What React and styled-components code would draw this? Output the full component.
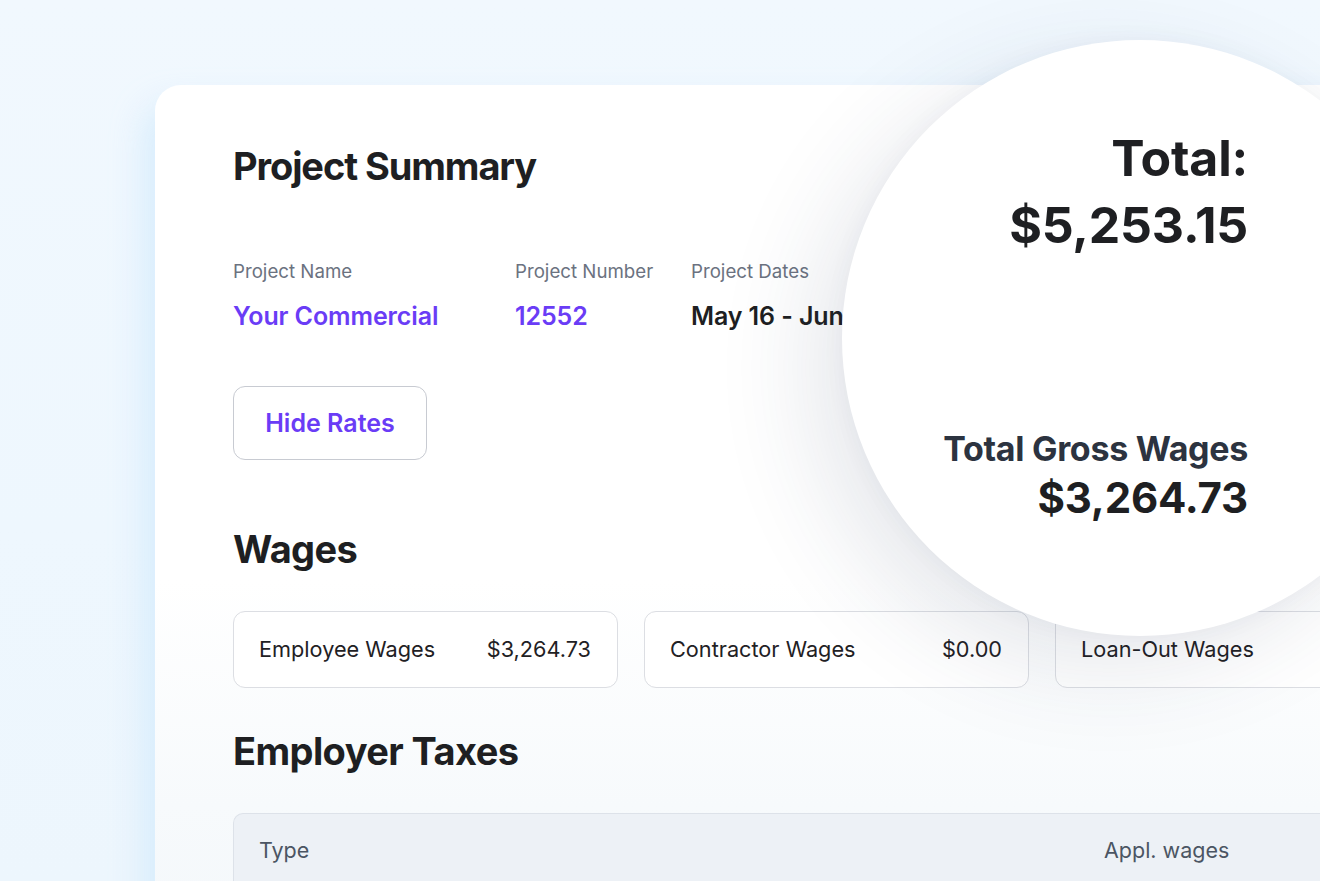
import React from "react";
import styled, { createGlobalStyle } from "styled-components";

const Global = createGlobalStyle`
  html, body { margin: 0; padding: 0; }
  body {
    font-family: Inter, "Noto Sans", "Liberation Sans", sans-serif;
    overflow: hidden;
    -webkit-font-smoothing: antialiased;
  }
`;

const Stage = styled.div`
  position: relative;
  width: 1320px;
  height: 881px;
  overflow: hidden;
  background: linear-gradient(180deg, #f1f8fe 0%, #eef7fe 60%, #edf6fd 100%);
  padding: 85px 0 0 155px;
  box-sizing: border-box;
`;

const Card = styled.div`
  position: relative;
  width: 1300px;
  height: 900px;
  background: linear-gradient(180deg, #ffffff 0%, #ffffff 55%, #f7fafc 80%, #f3f7fa 100%);
  border-radius: 26px 0 0 0;
  box-shadow: -10px 20px 34px rgba(205, 232, 252, 0.75);
  padding: 62px 0 0 78px;
  box-sizing: border-box;
  display: flex;
  flex-direction: column;
  align-items: flex-start;
`;

const Heading = styled.h1`
  margin: ${(p) => p.$mt || 0}px 0 0 0;
  font-size: 38px;
  line-height: 1;
  font-weight: 700;
  letter-spacing: ${(p) => (p.$tight ? "-1.1px" : "-0.6px")};
  color: #1e1f22;
`;

const InfoRow = styled.div`
  display: flex;
  margin-top: 78px;
`;

const InfoCol = styled.div`
  width: ${(p) => p.$w}px;
  display: flex;
  flex-direction: column;
  gap: 22px;
  white-space: nowrap;
`;

const Label = styled.div`
  font-size: 18.7px;
  line-height: 1;
  color: #6b7280;
`;

const Value = styled.div`
  font-size: 25px;
  line-height: 1;
  font-weight: 600;
  letter-spacing: -0.1px;
  color: ${(p) => (p.$accent ? "#6a3cf6" : "#1e1f22")};
`;

const Button = styled.button`
  margin-top: 57px;
  width: 194px;
  height: 74px;
  border: 1px solid #c8cbd2;
  border-radius: 12px;
  background: #fff;
  font-family: inherit;
  font-size: 25px;
  font-weight: 600;
  color: #6a3cf6;
  cursor: pointer;
`;

const WageRow = styled.div`
  display: flex;
  gap: 26px;
  margin-top: 43px;
`;

const WageCard = styled.div`
  width: 385px;
  height: 77px;
  box-sizing: border-box;
  border: 1px solid #dcdee3;
  border-radius: 12px;
  background: #ffffff;
  padding: 0 26px 0 25px;
  display: flex;
  align-items: center;
  justify-content: space-between;
  font-size: 21.7px;
  color: #1f2124;
  flex-shrink: 0;
  white-space: nowrap;
`;

const Table = styled.div`
  margin-top: 43px;
  width: 1200px;
  height: 80px;
  border: 1px solid #dde2e9;
  border-bottom: none;
  border-radius: 10px 0 0 0;
  background: #edf1f6;
  box-sizing: border-box;
  display: grid;
  grid-template-columns: 845px auto;
  align-items: start;
  padding: 23px 0 0 25px;
`;

const HeadCell = styled.div`
  font-size: 21.5px;
  color: #4b5563;
`;

const Circle = styled.div`
  position: absolute;
  left: 842px;
  top: 40px;
  width: 596px;
  height: 596px;
  border-radius: 50%;
  background: #fff;
  box-shadow: -30px 30px 100px rgba(40, 60, 90, 0.12), 0 0 24px rgba(40, 60, 90, 0.04);
  box-sizing: border-box;
  padding: 85px 190px 0 0;
  display: flex;
  flex-direction: column;
  align-items: flex-end;
  text-align: right;
  z-index: 2;
`;

const BigTotal = styled.div`
  font-size: 50px;
  line-height: 67px;
  font-weight: 700;
  letter-spacing: -0.2px;
  color: #1e1f22;
`;

const GrossLabel = styled.div`
  margin-top: 169px;
  font-size: 34px;
  line-height: 41px;
  font-weight: 700;
  color: #2c3340;
  letter-spacing: -0.3px;
`;

const GrossValue = styled.div`
  margin-top: 4px;
  font-size: 42px;
  line-height: 50px;
  font-weight: 700;
  color: #1e1f22;
  letter-spacing: -0.2px;
`;

export default function App() {
  return (
    <>
      <Global />
      <Stage>
        <Card>
          <Heading $tight>Project Summary</Heading>
          <InfoRow>
            <InfoCol $w={282}>
              <Label>Project Name</Label>
              <Value $accent>Your Commercial</Value>
            </InfoCol>
            <InfoCol $w={176}>
              <Label>Project Number</Label>
              <Value $accent>12552</Value>
            </InfoCol>
            <InfoCol $w={300}>
              <Label>Project Dates</Label>
              <Value>May 16 - June 2</Value>
            </InfoCol>
          </InfoRow>
          <Button>Hide Rates</Button>
          <Heading $mt={70}>Wages</Heading>
          <WageRow>
            <WageCard>
              <span>Employee Wages</span>
              <span>$3,264.73</span>
            </WageCard>
            <WageCard>
              <span>Contractor Wages</span>
              <span>$0.00</span>
            </WageCard>
            <WageCard>
              <span>Loan-Out Wages</span>
            </WageCard>
          </WageRow>
          <Heading $mt={44}>Employer Taxes</Heading>
          <Table>
            <HeadCell>Type</HeadCell>
            <HeadCell>Appl. wages</HeadCell>
          </Table>
        </Card>
        <Circle>
          <BigTotal>Total:</BigTotal>
          <BigTotal>$5,253.15</BigTotal>
          <GrossLabel>Total Gross Wages</GrossLabel>
          <GrossValue>$3,264.73</GrossValue>
        </Circle>
      </Stage>
    </>
  );
}
